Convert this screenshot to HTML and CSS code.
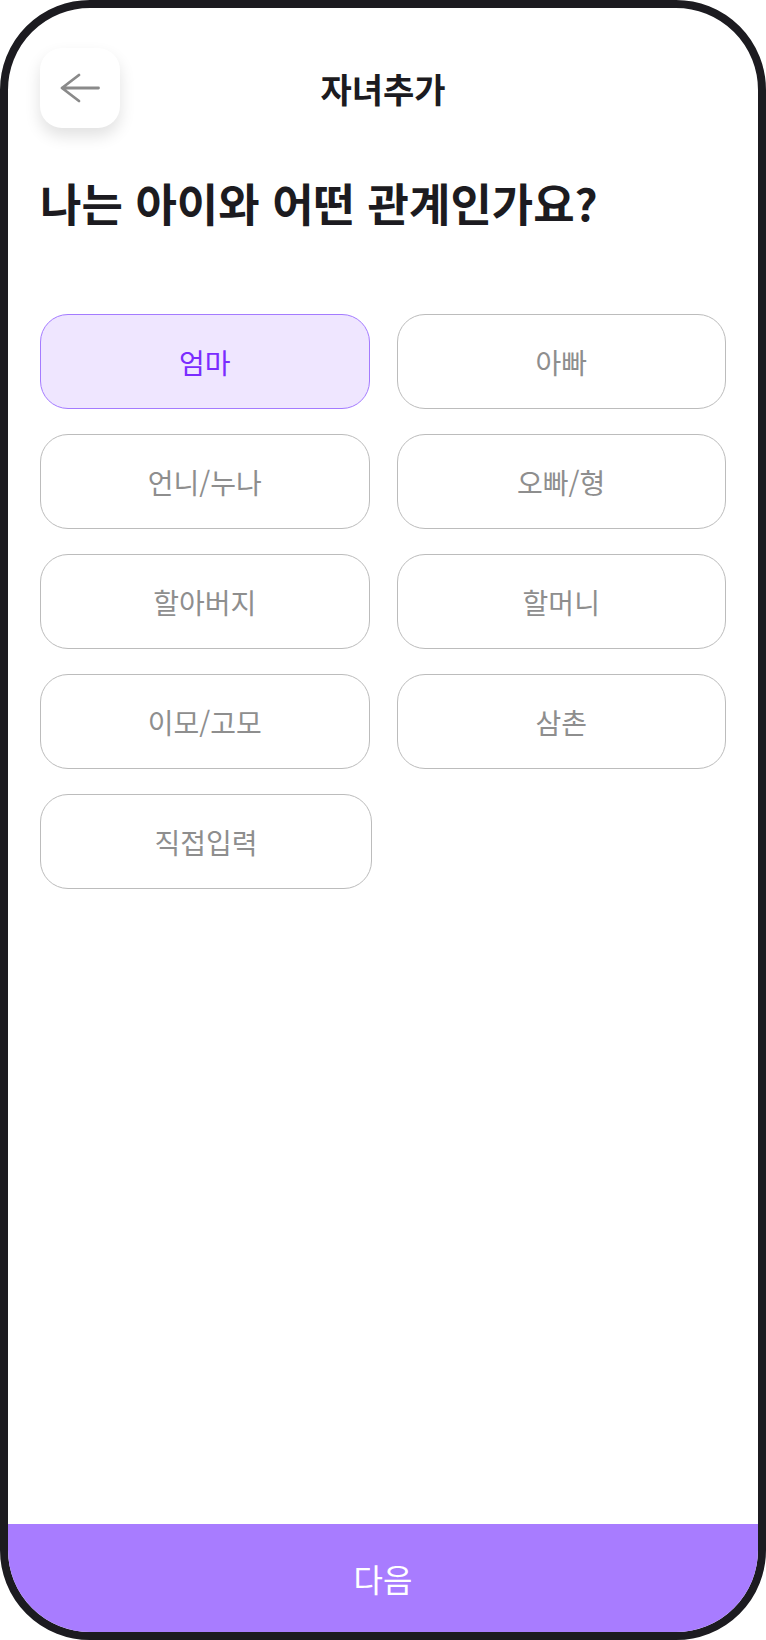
FILE: index.html
```html
<!DOCTYPE html>
<html lang="ko">
<head>
  <meta charset="UTF-8" />
  <meta name="viewport" content="width=device-width, initial-scale=1.0">
  <title>자녀추가</title>
  <link rel="stylesheet" href="styles.css">
</head>
<body>

<div class="phone">

  <!-- En-tête -->
  <div class="header">
    <button class="back" type="button" aria-label="뒤로">
      <svg width="40" height="30" viewBox="0 0 40 30">
        <path d="M2 15 H38.5 M19 2 L2 15 L19 28" fill="none" stroke="#8a8a8a" stroke-width="2.8" stroke-linecap="round" stroke-linejoin="round"/>
      </svg>
    </button>
    <div class="title">자녀추가</div>
    <div></div>
  </div>

  <h1>나는 아이와 어떤 관계인가요?</h1>

  <!-- Choix de la relation -->
  <div class="choices">
    <button class="choice selected" type="button">엄마</button>
    <button class="choice" type="button">아빠</button>
    <button class="choice" type="button">언니/누나</button>
    <button class="choice" type="button">오빠/형</button>
    <button class="choice" type="button">할아버지</button>
    <button class="choice" type="button">할머니</button>
    <button class="choice" type="button">이모/고모</button>
    <button class="choice" type="button">삼촌</button>
    <button class="choice custom" type="button">직접입력</button>
  </div>

  <button class="next" type="button">다음</button>

</div>

</body>
</html>
```

FILE: styles.css
```css
html, body {
  margin: 0;
  padding: 0;
  background: #ffffff;
  font-family: "Noto Sans CJK KR", "Noto Sans", sans-serif;
}

.phone {
  box-sizing: border-box;
  width: 766px;
  height: 1640px;
  border: 8px solid #1c1b20;
  border-radius: 90px;
  overflow: hidden;
  display: flex;
  flex-direction: column;
  background: #ffffff;
}

.header {
  display: grid;
  grid-template-columns: 80px 1fr 80px;
  align-items: center;
  padding: 40px 32px 0;
}

.back {
  width: 80px;
  height: 80px;
  border: none;
  border-radius: 22px;
  background: #ffffff;
  box-shadow: 0 8px 16px rgba(0, 0, 0, 0.12);
  display: flex;
  align-items: center;
  justify-content: center;
  padding: 0;
  cursor: pointer;
}

.title {
  text-align: center;
  font-size: 34px;
  font-weight: 700;
  color: #1c1b20;
}

h1 {
  margin: 48px 32px 0;
  font-size: 45px;
  line-height: 54px;
  font-weight: 700;
  color: #1c1b20;
}

.choices {
  display: grid;
  grid-template-columns: repeat(2, minmax(0, 1fr));
  column-gap: 27px;
  row-gap: 25px;
  padding: 0 32px;
  margin-top: 84px;
}

.choice {
  height: 95px;
  box-sizing: border-box;
  border: 1.5px solid #bcbcbc;
  border-radius: 28px;
  background: #ffffff;
  color: #8e8e8e;
  font-family: inherit;
  font-size: 28px;
  cursor: pointer;
}

.choice.selected {
  background: #efe6ff;
  border-color: #a47bff;
  color: #7a2cff;
}

.choice.custom {
  width: 332px;
}

.next {
  margin-top: auto;
  height: 108px;
  border: none;
  background: #a87cff;
  color: #ffffff;
  font-family: inherit;
  font-size: 32px;
  cursor: pointer;
}
```
